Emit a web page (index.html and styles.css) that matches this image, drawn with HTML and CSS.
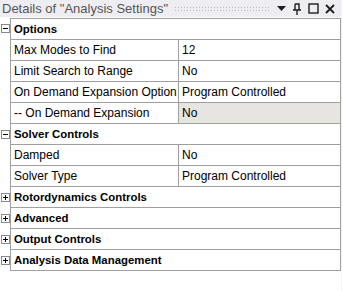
FILE: index.html
```html
<!DOCTYPE html>
<html lang="en">
<head>
    <meta charset="UTF-8">
    <title>Details of "Analysis Settings"</title>
    <link rel="stylesheet" href="styles.css">
</head>
<body>
    <div class="panel">
        <header class="titlebar">
            <span class="title">Details of "Analysis Settings"</span>
            <span class="grip"></span>
            <span class="tools">
                <svg width="9" height="6" viewBox="0 0 9 6"><path d="M0 0H9L4.5 5Z" fill="#1e1e1e"/></svg>
                <svg width="10" height="12" viewBox="0 0 10 12"><path d="M3 1H7V7M3 1V7M1 7H9M5 7V12" stroke="#1e1e1e" stroke-width="1.4" fill="none"/></svg>
                <svg width="11" height="11" viewBox="0 0 11 11"><rect x="1" y="1" width="9" height="9" stroke="#1e1e1e" stroke-width="1.4" fill="none"/></svg>
                <svg width="10" height="10" viewBox="0 0 10 10"><path d="M1 1L9 9M9 1L1 9" stroke="#1e1e1e" stroke-width="1.8"/></svg>
            </span>
        </header>

        <div class="grid">
            <div class="row group first"><span class="toggle minus"></span><div class="cell head">Options</div></div>
            <div class="row"><span></span><div class="cell label">Max Modes to Find</div><div class="cell value">12</div></div>
            <div class="row"><span></span><div class="cell label">Limit Search to Range</div><div class="cell value">No</div></div>
            <div class="row"><span></span><div class="cell label">On Demand Expansion Option</div><div class="cell value">Program Controlled</div></div>
            <div class="row"><span></span><div class="cell label">-- On Demand Expansion</div><div class="cell value readonly">No</div></div>

            <div class="row group"><span class="toggle minus"></span><div class="cell head">Solver Controls</div></div>
            <div class="row"><span></span><div class="cell label">Damped</div><div class="cell value">No</div></div>
            <div class="row"><span></span><div class="cell label">Solver Type</div><div class="cell value">Program Controlled</div></div>

            <div class="row group"><span class="toggle plus"></span><div class="cell head">Rotordynamics Controls</div></div>
            <div class="row group"><span class="toggle plus"></span><div class="cell head">Advanced</div></div>
            <div class="row group"><span class="toggle plus"></span><div class="cell head">Output Controls</div></div>
            <div class="row group"><span class="toggle plus"></span><div class="cell head">Analysis Data Management</div></div>
        </div>
    </div>
</body>
</html>
```

FILE: styles.css
```css
* {
    margin: 0;
    padding: 0;
    box-sizing: border-box;
}

body {
    font-family: 'Liberation Sans', Arial, sans-serif;
    font-size: 12px;
    color: #000;
    background: #fff;
    width: 343px;
    height: 291px;
    overflow: hidden;
}

.panel {
    width: 342px;
    height: 291px;
    background: #fff;
    border-right: 1px solid #f4f4f4;
}

.titlebar {
    height: 17px;
    background: #eeeef2;
    display: flex;
    align-items: center;
    padding-left: 2px;
    padding-right: 6px;
}

.title {
    font-size: 13px;
    color: #555;
    white-space: nowrap;
}

.grip {
    flex: 1;
    height: 5px;
    margin: 0 6px 0 6px;
    background-image: radial-gradient(#b9b9bd 0.6px, transparent 0.8px);
    background-size: 3px 3px;
}

.tools {
    display: flex;
    align-items: center;
    gap: 6px;
}

.grid {
    margin-top: 1px;
}

.row {
    display: grid;
    grid-template-columns: 10px 168px 1fr;
    height: 21px;
}

.row.first {
    height: 22px;
}

.toggle {
    position: relative;
    width: 9px;
    height: 9px;
    margin: 6px 0 0 1px;
    border: 1px solid #8a8a8a;
}

.toggle::before,
.toggle.plus::after {
    content: '';
    position: absolute;
    background: #000;
}

.toggle::before {
    left: 1px;
    top: 3px;
    width: 5px;
    height: 1px;
}

.toggle.plus::after {
    left: 3px;
    top: 1px;
    width: 1px;
    height: 5px;
}

.cell {
    border-left: 1px solid #a0a0a0;
    border-bottom: 1px solid #a0a0a0;
    padding: 0 0 0 3px;
    line-height: 20px;
    white-space: nowrap;
    overflow: hidden;
}

.row.first .cell {
    border-top: 1px solid #a0a0a0;
}

.head {
    grid-column: 2 / 4;
    font-weight: bold;
    font-size: 11.4px;
    border-right: 1px solid #a0a0a0;
}

.value {
    border-right: 1px solid #a0a0a0;
}

.readonly {
    background: #e6e5e2;
}
```
